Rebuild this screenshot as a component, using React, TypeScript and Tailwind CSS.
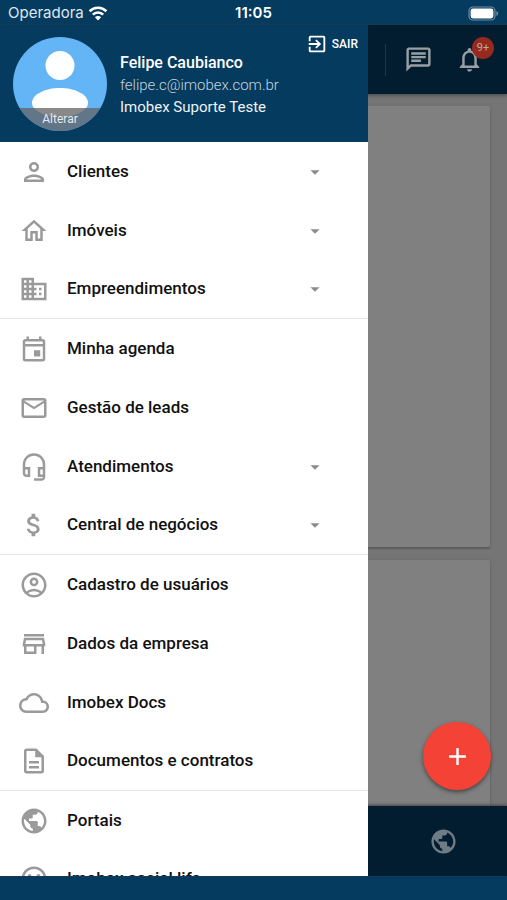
import type { ReactNode } from "react";
import type { IconType } from "react-icons";
import {
  MdAdd,
  MdArrowDropDown,
  MdDomain,
  MdExitToApp,
  MdNotificationsNone,
  MdOutlineAccountCircle,
  MdOutlineAttachMoney,
  MdOutlineChat,
  MdOutlineCloud,
  MdOutlineDescription,
  MdOutlineEmail,
  MdOutlineEvent,
  MdOutlineHeadsetMic,
  MdOutlineHome,
  MdOutlinePerson,
  MdOutlineSentimentSatisfied,
  MdOutlineStore,
  MdPublic,
} from "react-icons/md";

type Item = { label: string; icon: IconType; expandable?: boolean };

const groups: Item[][] = [
  [
    { label: "Clientes", icon: MdOutlinePerson, expandable: true },
    { label: "Imóveis", icon: MdOutlineHome, expandable: true },
    { label: "Empreendimentos", icon: MdDomain, expandable: true },
  ],
  [
    { label: "Minha agenda", icon: MdOutlineEvent },
    { label: "Gestão de leads", icon: MdOutlineEmail },
    { label: "Atendimentos", icon: MdOutlineHeadsetMic, expandable: true },
    { label: "Central de negócios", icon: MdOutlineAttachMoney, expandable: true },
  ],
  [
    { label: "Cadastro de usuários", icon: MdOutlineAccountCircle },
    { label: "Dados da empresa", icon: MdOutlineStore },
    { label: "Imobex Docs", icon: MdOutlineCloud },
    { label: "Documentos e contratos", icon: MdOutlineDescription },
  ],
  [
    { label: "Portais", icon: MdPublic },
    { label: "Imobex social life", icon: MdOutlineSentimentSatisfied },
  ],
];

function WifiIcon() {
  return (
    <svg viewBox="0 0 20 15" className="h-[15px] w-5" fill="none" stroke="#fff" strokeWidth="2.6" aria-hidden="true">
      <path d="M1.6 5.2a12 12 0 0 1 16.8 0" />
      <path d="M4.8 8.6a7.4 7.4 0 0 1 10.4 0" />
      <path d="M10 14.4 6.9 11.2a4.4 4.4 0 0 1 6.2 0z" fill="#fff" stroke="none" />
    </svg>
  );
}

function BatteryIcon() {
  return (
    <svg viewBox="0 0 31 15" className="h-[15px] w-[31px]" aria-hidden="true">
      <rect x="1" y="1" width="26" height="13" rx="4" fill="none" stroke="#6f8ea5" strokeWidth="1.2" />
      <rect x="2.6" y="2.6" width="22.8" height="9.8" rx="2.4" fill="#fff" />
      <path d="M28.4 5v5c1.2-.4 1.8-1.4 1.8-2.5S29.6 5.4 28.4 5z" fill="#6f8ea5" />
    </svg>
  );
}

function StatusBar() {
  return (
    <div className="grid h-[25px] shrink-0 grid-cols-3 items-center bg-[#053b5f] px-2 pt-0.5 font-['Inter',sans-serif] text-[15px] text-[#dfe7ee]">
      <div className="flex items-center gap-1">
        <span>Operadora</span>
        <WifiIcon />
      </div>
      <span className="text-center font-semibold text-white">11:05</span>
      <div className="flex justify-end">
        <BatteryIcon />
      </div>
    </div>
  );
}

function Avatar() {
  return (
    <button type="button" className="relative size-[94px] shrink-0 overflow-hidden rounded-full bg-[#64b5f6]">
      <svg viewBox="0 0 94 94" className="size-full" fill="#fff" aria-hidden="true">
        <circle cx="47" cy="28.5" r="14.5" />
        <path d="M19 66c0-9 14-15 28-15s28 6 28 15c0 8-14 14-28 14S19 74 19 66z" />
      </svg>
      <span className="absolute inset-x-0 bottom-0 h-[23px] bg-[#616161]/75 text-xs leading-[22px] text-[#e4ebf2]">
        Alterar
      </span>
    </button>
  );
}

function DrawerHeader() {
  return (
    <header className="flex h-[117px] shrink-0 items-start bg-[#053b5f] pt-3 pr-2.5 pl-[13px] text-white">
      <Avatar />
      <div className="mt-[15px] ml-[13px] flex-1 whitespace-nowrap text-[15px] leading-[22px]">
        <p className="text-base leading-[22px] font-medium">Felipe Caubianco</p>
        <p className="font-light text-[#c6d3de]">felipe.c@imobex.com.br</p>
        <p className="text-[#eef3f7]">Imobex Suporte Teste</p>
      </div>
      <button type="button" className="-mt-1 flex items-center gap-1 text-xs leading-[22px] font-medium">
        <MdExitToApp className="size-[22px]" />
        SAIR
      </button>
    </header>
  );
}

function MenuItem({ label, icon: Icon, expandable }: Item) {
  return (
    <li className="h-[59px] border-[#e4e4e4] last:border-b">
      <button type="button" className="flex size-full items-center pr-[42px] pl-[19px] text-left text-[17px] font-medium text-[#111]">
        <Icon className="mr-[18px] size-[30px] shrink-0 text-[#9a9a9a]" />
        <span className="flex-1 whitespace-nowrap">{label}</span>
        {expandable && <MdArrowDropDown className="size-[22px] text-[#8c8c8c]" />}
      </button>
    </li>
  );
}

function Drawer() {
  return (
    <aside className="absolute inset-y-0 left-0 flex w-[368px] max-w-[80%] flex-col overflow-hidden bg-white">
      <DrawerHeader />
      <nav className="min-h-0 flex-1 overflow-y-auto [scrollbar-width:none]">
        {groups.map((items) => (
          <ul key={items[0].label}>
            {items.map((item) => (
              <MenuItem key={item.label} {...item} />
            ))}
          </ul>
        ))}
      </nav>
    </aside>
  );
}

function Card({ className, children }: { className: string; children?: ReactNode }) {
  return <section className={`rounded-xs bg-[#808080] shadow-[0_2px_2px_#5c5c5c,0_0_3px_#6a6a6a] ${className}`}>{children}</section>;
}

function Page() {
  return (
    <div className="flex h-full flex-col bg-[#757575]">
      <header className="z-0 flex h-[69px] shrink-0 items-center justify-end bg-[#021d30] pr-[23px] text-[#9a9fa3] shadow-[0_1px_4px_#444]">
        <span className="mr-[18px] h-8 w-px bg-[#1d3547]" />
        <button type="button" aria-label="Mensagens" className="mr-[22px]">
          <MdOutlineChat className="size-[29px]" />
        </button>
        <button type="button" aria-label="Notificações" className="relative">
          <MdNotificationsNone className="size-[29px]" />
          <span className="absolute -top-2 left-[17px] size-[22px] rounded-full bg-[#98291f] text-center text-[11px] leading-[22px] text-[#b9a9a7]">
            9+
          </span>
        </button>
      </header>
      <main className="flex min-h-0 flex-1 flex-col gap-[13px] overflow-hidden px-[17px] pt-3">
        <Card className="h-[441px] shrink-0" />
        <Card className="h-[441px] shrink-0" />
      </main>
      <footer className="z-0 flex h-[70px] shrink-0 justify-end bg-[#021d30] text-[#6f7b85] shadow-[0_-1px_3px_#444]">
        <button type="button" aria-label="Portais" className="flex w-1/4 items-center justify-center">
          <MdPublic className="size-[29px]" />
        </button>
      </footer>
    </div>
  );
}

export default function App() {
  return (
    <div className="flex h-screen flex-col overflow-hidden bg-[#053b5f] font-['Roboto',sans-serif]">
      <StatusBar />
      <div className="relative min-h-0 flex-1">
        <Page />
        <Drawer />
        <button
          type="button"
          aria-label="Adicionar"
          className="absolute right-4 bottom-[86px] flex size-[68px] items-center justify-center rounded-full bg-[#f44336] text-white shadow-[0_2px_4px_#444]"
        >
          <MdAdd className="size-[29px]" />
        </button>
      </div>
      <div className="h-6 shrink-0 bg-[#053b5f]" />
    </div>
  );
}
